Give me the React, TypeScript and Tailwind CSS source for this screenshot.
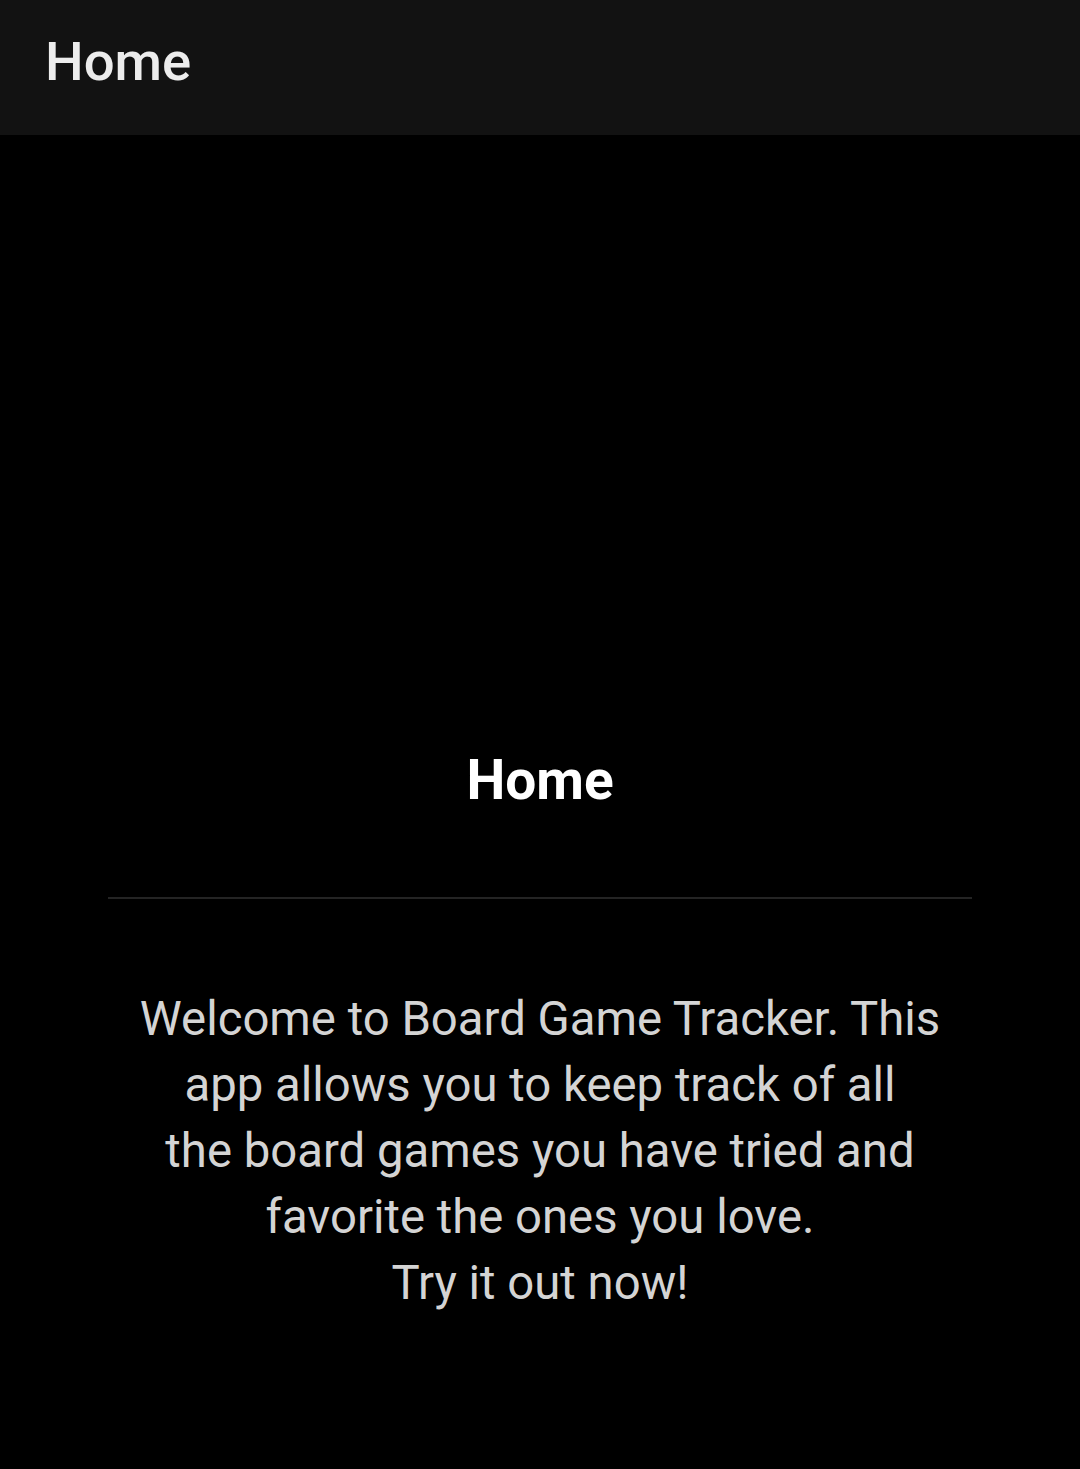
export default function App() {
  return (
    <div
      className="w-[1080px] h-[1469px] bg-black flex flex-col overflow-hidden"
      style={{ fontFamily: 'Roboto, "Noto Sans", sans-serif' }}
    >
      <header className="h-[135px] bg-[#121212] flex items-center px-[45px] shrink-0">
        <h1 className="text-[54.5px] leading-[66px] font-medium text-[#ececec] -mt-[14px]">Home</h1>
      </header>
      <main className="flex flex-col items-center pt-[612px]">
        <h2 className="text-[55px] leading-[66px] font-bold text-white">Home</h2>
        <div className="w-[864px] h-[2px] bg-[#242424] mt-[84px]" />
        <p className="mt-[87px] text-[47.3px] leading-[66px] text-center text-[#d4d4d4]">
          Welcome to Board Game Tracker. This
          <br />
          app allows you to keep track of all
          <br />
          the board games you have tried and
          <br />
          favorite the ones you love.
          <br />
          Try it out now!
        </p>
      </main>
    </div>
  );
}
